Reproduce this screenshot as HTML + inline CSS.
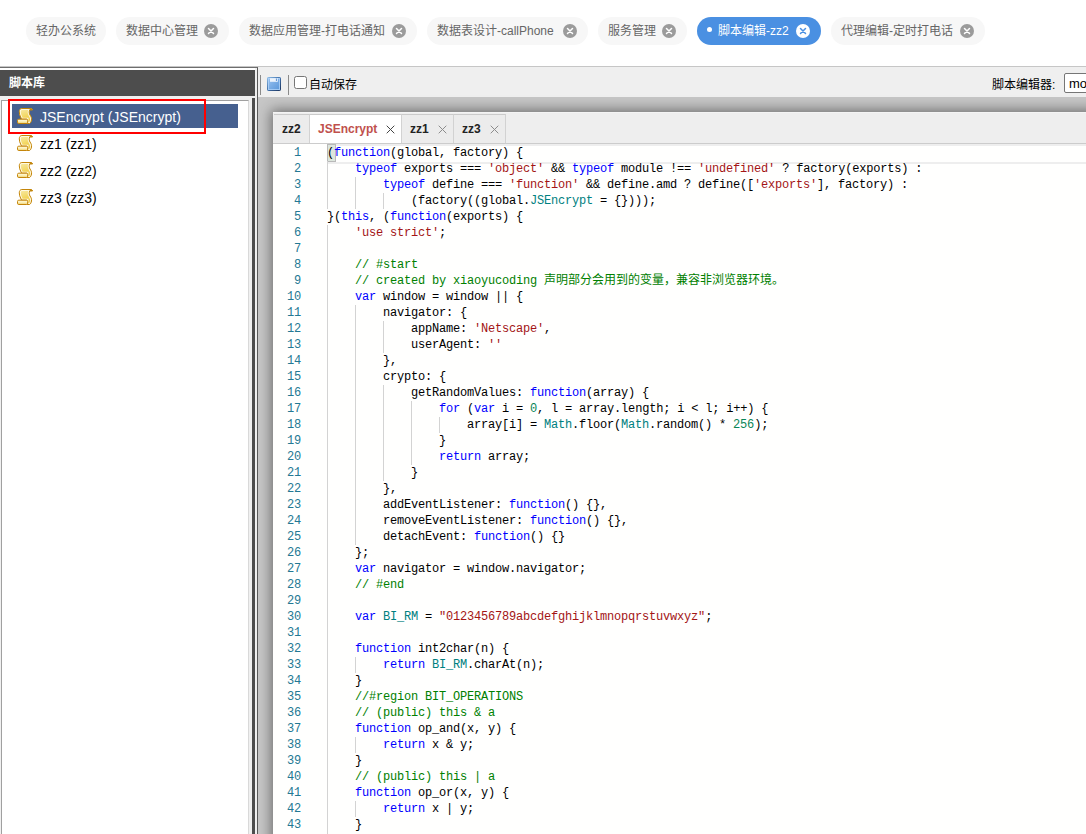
<!DOCTYPE html>
<html lang="zh-CN">
<head>
<meta charset="utf-8">
<title>脚本编辑-zz2</title>
<style>
*{box-sizing:border-box;margin:0;padding:0}
html,body{width:1086px;height:834px;overflow:hidden;background:#fff}
body{position:relative;font-family:"Liberation Sans","Noto Sans CJK SC",sans-serif;font-size:12px;color:#000}
/* ---------- top pills ---------- */
.pills{position:absolute;left:0;top:17px;height:28px;width:1086px}
.pill{position:absolute;top:0;height:28px;border-radius:14px;background:#f7f7f7;color:#666;font-size:12px;line-height:28px;padding-left:10px;white-space:nowrap}
.pill .x{position:absolute;right:11px;top:7px;width:14px;height:14px;border-radius:50%;background:#9b9b9b}
.pill .x svg{position:absolute;left:0;top:0;width:14px;height:14px}
.pill.on{background:#4a90e2;color:#fff;padding-left:21px}
.pill.on .dot{position:absolute;left:10.3px;top:9.6px;width:5px;height:5px;border-radius:50%;background:#fff}
.pill.on .x{background:#fff}
/* ---------- left panel ---------- */
.topline{position:absolute;left:0;top:66px;width:1086px;height:1px;background:#c6c6c6}
.left{position:absolute;left:0;top:67px;width:258px;height:767px;background:#f0f0f0;border-top:1px solid #6e6e6e;border-right:1px solid #5a5a5a}
.lhead{position:absolute;left:0;top:0;width:255px;height:28px;background:#4d4d4d;color:#fff;font-weight:bold;font-size:12px;line-height:27px;padding-left:9px;border-top:2px solid #fff}
.tree{position:absolute;left:1px;top:32px;width:248px;height:740px;background:#fff;border:1px solid #a0a0a0;border-right-color:#d9d9d9}
.split{position:absolute;left:252px;top:30px;width:3px;height:740px;background:#4d4d4d}
.row{position:absolute;left:10px;width:226px;height:24px;font-size:14px;line-height:26px;color:#000;padding-left:28px;white-space:nowrap}
.row.sel{background:#46608f;color:#fff}
.row svg{position:absolute;left:5px;top:4px;width:16px;height:16px}
.redbox{position:absolute;left:8px;top:99px;width:198px;height:35px;border:2px solid #ff0000}
/* ---------- right panel ---------- */
.right{position:absolute;left:258px;top:67px;width:828px;height:767px;background:#c6c6c6}
.tbar{position:absolute;left:0;top:0;width:828px;height:30px;background:#efefef}
.sep{position:absolute;top:8px;width:1px;height:20px;background:#8a8a8a}
.save{position:absolute;left:9px;top:10px;width:14px;height:14px}
.cb{position:absolute;left:36px;top:9px;width:13px;height:13px;border:1px solid #767676;border-radius:2.5px;background:#fff}
.cbl{position:absolute;left:51px;top:9px;font-size:12px;line-height:18px;color:#000}
.edl{position:absolute;left:734px;top:9px;font-size:12px;line-height:18px;color:#000}
.sel2{position:absolute;left:806px;top:6px;width:40px;height:20px;border:1px solid #767676;border-radius:2px;background:#fff;font-size:13px;line-height:19px;padding-left:4px}
.panel{position:absolute;left:15px;top:45px;width:830px;height:740px;background:#fff;box-shadow:0 0 12px 2px rgba(0,0,0,.45)}
.tabs{position:absolute;left:0;top:0;width:830px;height:32px;background:#eeeeee;border-bottom:1px solid #cccccc;border-top:1px solid #f4f4f4}
.tab{position:absolute;top:1px;height:29px;background:#ececec;border-top:1px solid #cbcbcb;border-right:1px solid #d2d2d2;font-weight:bold;font-size:12px;line-height:29px;color:#222;padding-left:8px;white-space:nowrap}
.tab.on{background:#fff;color:#c0504d}
.tab b{position:absolute;right:6px;top:10px;width:9px;height:9px}
.tab b svg{display:block;width:9px;height:9px;stroke:#8c8c8c}
.tab.on b svg{stroke:#444}
/* ---------- editor ---------- */
.ed{position:absolute;left:0;top:32px;width:830px;height:720px;background:#fffffe;font-family:"Liberation Mono","Noto Sans CJK SC",monospace;font-size:12px;letter-spacing:-0.2px;line-height:16px}
.nums{position:absolute;left:0;top:1px;width:28px;text-align:right;color:#237893}
.nums div{height:16px}
.code{position:absolute;left:54px;top:1px;width:775px;color:#000}
.ln{position:relative;height:16px;white-space:pre}
.g{position:absolute;left:0;top:0;height:16px;background:repeating-linear-gradient(to right,#d3d3d3 0,#d3d3d3 1px,transparent 1px,transparent 28px)}
.cur{position:absolute;left:54px;top:0;width:776px;height:20px;border:2px solid #eeeeee}
.bmb{position:absolute;left:54px;top:0;width:9px;height:18px;background:#dde6dd;border:1px solid #b9b9b9}
.z{letter-spacing:0}
.k{color:#0000ff}.s{color:#a31515}.c{color:#008000}.n{color:#098658}.t{color:#008080}
</style>
</head>
<body>
<svg width="0" height="0" style="position:absolute"><defs><linearGradient id="sc" x1="0" y1="0" x2="0.3" y2="1"><stop offset="0" stop-color="#f8ecb0"/><stop offset="0.55" stop-color="#f3d968"/><stop offset="1" stop-color="#efc534"/></linearGradient><linearGradient id="sr" x1="0" y1="0" x2="0" y2="1"><stop offset="0" stop-color="#fffbe6"/><stop offset="0.5" stop-color="#fbf0b8"/><stop offset="1" stop-color="#efd070"/></linearGradient><clipPath id="scp"><path d="M4.8 .5H14c.9.1 1.400.700 1.500 1.500H12.700c-.800 1.800-.500 3.600.300 5 1.200 1.600 1.800 3.100 1.500 5-.300 1.800-1 3-2 3.500H10V11.200H4.600L3.600 9C2.800 7.500 2.300 6 2.300 3.800 2.300 2 3.200.500 4.800.500z"/></clipPath></defs></svg>
<!-- top tab pills -->
<div class="pills">
  <div class="pill" style="left:26px;width:80px">轻办公系统</div>
  <div class="pill" style="left:116px;width:113px">数据中心管理<span class="x"><svg viewBox="0 0 14 14"><path d="M4.5 4.5l5 5M9.5 4.5l-5 5" stroke="#fff" stroke-width="1.5" stroke-linecap="round" fill="none"/></svg></span></div>
  <div class="pill" style="left:239px;width:178px">数据应用管理-打电话通知<span class="x"><svg viewBox="0 0 14 14"><path d="M4.5 4.5l5 5M9.5 4.5l-5 5" stroke="#fff" stroke-width="1.5" stroke-linecap="round" fill="none"/></svg></span></div>
  <div class="pill" style="left:427px;width:161px">数据表设计-callPhone<span class="x"><svg viewBox="0 0 14 14"><path d="M4.5 4.5l5 5M9.5 4.5l-5 5" stroke="#fff" stroke-width="1.5" stroke-linecap="round" fill="none"/></svg></span></div>
  <div class="pill" style="left:598px;width:89px">服务管理<span class="x"><svg viewBox="0 0 14 14"><path d="M4.5 4.5l5 5M9.5 4.5l-5 5" stroke="#fff" stroke-width="1.5" stroke-linecap="round" fill="none"/></svg></span></div>
  <div class="pill on" style="left:697px;width:124px"><span class="dot"></span>脚本编辑-zz2<span class="x"><svg viewBox="0 0 14 14"><path d="M4.5 4.5l5 5M9.5 4.5l-5 5" stroke="#4a90e2" stroke-width="1.5" stroke-linecap="round" fill="none"/></svg></span></div>
  <div class="pill" style="left:831px;width:154px">代理编辑-定时打电话<span class="x"><svg viewBox="0 0 14 14"><path d="M4.5 4.5l5 5M9.5 4.5l-5 5" stroke="#fff" stroke-width="1.5" stroke-linecap="round" fill="none"/></svg></span></div>
</div>
<div class="topline"></div>

<!-- left: script library -->
<div class="left">
  <div class="lhead">脚本库</div>
  <div class="tree">
    <div class="row sel" style="top:3px"><svg viewBox="0 0 16 16"><path d="M4.8 .5H14c.9.1 1.400.700 1.500 1.500H12.700c-.800 1.800-.500 3.600.300 5 1.200 1.600 1.800 3.100 1.500 5-.300 1.800-1 3-2 3.500H10V11.200H4.600L3.600 9C2.800 7.500 2.300 6 2.300 3.800 2.300 2 3.200.500 4.800.500z" fill="url(#sc)"/><path d="M4.8 .5H14c.9.1 1.400.700 1.500 1.500H12.700c-.800 1.800-.500 3.600.300 5 1.200 1.600 1.800 3.100 1.500 5-.300 1.800-1 3-2 3.500H10V11.200H4.600L3.600 9C2.800 7.500 2.300 6 2.300 3.800 2.300 2 3.200.500 4.800.500z" fill="none" stroke="#fffdf0" stroke-opacity=".85" stroke-width="3" clip-path="url(#scp)"/><path d="M12.700 2h2.800c-.100-.800-.600-1.400-1.500-1.500h-1.200z" fill="#b8871a"/><path d="M4.8 .5H14c.9.1 1.400.700 1.500 1.500H12.700c-.800 1.800-.500 3.600.300 5 1.200 1.600 1.800 3.100 1.500 5-.300 1.800-1 3-2 3.500H10V11.200H4.600L3.600 9C2.800 7.500 2.300 6 2.300 3.800 2.300 2 3.200.500 4.800.500z" fill="none" stroke="#c4850a" stroke-width="1" stroke-linejoin="round"/><rect x=".5" y="11.200" width="10.200" height="4.300" rx="1.300" fill="url(#sr)" stroke="#c4850a" stroke-width="1"/></svg>JSEncrypt (JSEncrypt)</div>
    <div class="row" style="top:30px"><svg viewBox="0 0 16 16"><path d="M4.8 .5H14c.9.1 1.400.700 1.500 1.500H12.700c-.800 1.800-.500 3.600.300 5 1.200 1.600 1.800 3.100 1.500 5-.300 1.800-1 3-2 3.500H10V11.200H4.600L3.600 9C2.800 7.500 2.300 6 2.300 3.800 2.300 2 3.200.500 4.800.500z" fill="url(#sc)"/><path d="M4.8 .5H14c.9.1 1.400.700 1.500 1.500H12.700c-.800 1.800-.500 3.600.300 5 1.200 1.600 1.800 3.100 1.500 5-.300 1.800-1 3-2 3.500H10V11.200H4.600L3.600 9C2.800 7.500 2.300 6 2.300 3.800 2.300 2 3.200.500 4.800.500z" fill="none" stroke="#fffdf0" stroke-opacity=".85" stroke-width="3" clip-path="url(#scp)"/><path d="M12.700 2h2.800c-.100-.800-.600-1.400-1.500-1.500h-1.200z" fill="#b8871a"/><path d="M4.8 .5H14c.9.1 1.400.700 1.500 1.500H12.700c-.800 1.800-.500 3.600.300 5 1.200 1.600 1.800 3.100 1.500 5-.300 1.800-1 3-2 3.500H10V11.200H4.600L3.600 9C2.800 7.500 2.300 6 2.300 3.800 2.300 2 3.200.500 4.800.500z" fill="none" stroke="#c4850a" stroke-width="1" stroke-linejoin="round"/><rect x=".5" y="11.200" width="10.200" height="4.300" rx="1.300" fill="url(#sr)" stroke="#c4850a" stroke-width="1"/></svg>zz1 (zz1)</div>
    <div class="row" style="top:57px"><svg viewBox="0 0 16 16"><path d="M4.8 .5H14c.9.1 1.400.700 1.500 1.500H12.700c-.800 1.800-.500 3.600.300 5 1.200 1.600 1.800 3.100 1.500 5-.300 1.800-1 3-2 3.500H10V11.200H4.600L3.600 9C2.800 7.500 2.300 6 2.300 3.800 2.300 2 3.200.500 4.800.500z" fill="url(#sc)"/><path d="M4.8 .5H14c.9.1 1.400.700 1.500 1.500H12.700c-.800 1.800-.500 3.600.300 5 1.200 1.600 1.800 3.100 1.500 5-.300 1.800-1 3-2 3.500H10V11.200H4.600L3.600 9C2.800 7.500 2.300 6 2.300 3.800 2.300 2 3.200.500 4.800.500z" fill="none" stroke="#fffdf0" stroke-opacity=".85" stroke-width="3" clip-path="url(#scp)"/><path d="M12.700 2h2.800c-.100-.800-.600-1.400-1.500-1.500h-1.200z" fill="#b8871a"/><path d="M4.8 .5H14c.9.1 1.400.700 1.500 1.500H12.700c-.800 1.800-.500 3.600.300 5 1.200 1.600 1.800 3.100 1.500 5-.300 1.800-1 3-2 3.500H10V11.200H4.600L3.600 9C2.800 7.500 2.300 6 2.300 3.800 2.300 2 3.200.500 4.800.500z" fill="none" stroke="#c4850a" stroke-width="1" stroke-linejoin="round"/><rect x=".5" y="11.200" width="10.200" height="4.300" rx="1.300" fill="url(#sr)" stroke="#c4850a" stroke-width="1"/></svg>zz2 (zz2)</div>
    <div class="row" style="top:84px"><svg viewBox="0 0 16 16"><path d="M4.8 .5H14c.9.1 1.400.700 1.500 1.500H12.700c-.800 1.800-.500 3.600.300 5 1.200 1.600 1.800 3.100 1.500 5-.300 1.800-1 3-2 3.500H10V11.200H4.600L3.600 9C2.800 7.500 2.300 6 2.300 3.800 2.300 2 3.200.500 4.800.500z" fill="url(#sc)"/><path d="M4.8 .5H14c.9.1 1.400.700 1.500 1.500H12.700c-.800 1.800-.500 3.600.300 5 1.200 1.600 1.800 3.100 1.500 5-.300 1.800-1 3-2 3.500H10V11.200H4.600L3.600 9C2.800 7.500 2.300 6 2.300 3.800 2.300 2 3.200.500 4.800.500z" fill="none" stroke="#fffdf0" stroke-opacity=".85" stroke-width="3" clip-path="url(#scp)"/><path d="M12.700 2h2.800c-.100-.800-.600-1.400-1.500-1.500h-1.200z" fill="#b8871a"/><path d="M4.8 .5H14c.9.1 1.400.700 1.500 1.500H12.700c-.800 1.800-.500 3.600.300 5 1.200 1.600 1.800 3.100 1.500 5-.300 1.800-1 3-2 3.500H10V11.200H4.600L3.600 9C2.800 7.500 2.300 6 2.300 3.800 2.300 2 3.200.500 4.800.500z" fill="none" stroke="#c4850a" stroke-width="1" stroke-linejoin="round"/><rect x=".5" y="11.200" width="10.200" height="4.300" rx="1.300" fill="url(#sr)" stroke="#c4850a" stroke-width="1"/></svg>zz3 (zz3)</div>
  </div>
  <div class="split"></div>
</div>
<div class="redbox"></div>

<!-- right: editor -->
<div class="right">
  <div class="tbar">
    <div class="sep" style="left:2px"></div>
    <svg class="save" viewBox="0 0 14 14">
      <defs><linearGradient id="sg" x1="0" y1="0" x2="1" y2="1"><stop offset="0" stop-color="#9cc4f2"/><stop offset="1" stop-color="#5694d8"/></linearGradient>
      <linearGradient id="so" x1="0" y1="0" x2="1" y2="1"><stop offset="0" stop-color="#8cbbe6"/><stop offset="0.5" stop-color="#3f6ea8"/><stop offset="1" stop-color="#1c355f"/></linearGradient></defs>
      <rect x="0.5" y="0.5" width="13" height="13" rx="0.700" fill="url(#sg)" stroke="url(#so)"/>
      <rect x="1.5" y="1.5" width="11" height="11" fill="none" stroke="#b4d6fa" stroke-opacity=".75"/>
      <rect x="3" y="1.200" width="7.800" height="3.600" fill="#ecf3fc"/>
      <rect x="8.900" y="1.500" width="1" height="2.500" fill="#5d92d2"/>
    </svg>
    <div class="sep" style="left:30px"></div>
    <div class="cb"></div>
    <div class="cbl">自动保存</div>
    <div class="edl">脚本编辑器:</div>
    <div class="sel2">monaco</div>
  </div>
  <div class="panel">
    <div class="tabs">
      <div class="tab" style="left:1px;width:36px">zz2</div>
      <div class="tab on" style="left:37px;width:92px">JSEncrypt<b><svg viewBox="0 0 9 9"><path d="M0.700 0.700l7.600 7.600M8.300 0.700l-7.600 7.600" stroke-width="1" fill="none"/></svg></b></div>
      <div class="tab" style="left:129px;width:52px">zz1<b><svg viewBox="0 0 9 9"><path d="M0.700 0.700l7.600 7.600M8.300 0.700l-7.600 7.600" stroke-width="1" fill="none"/></svg></b></div>
      <div class="tab" style="left:181px;width:52px">zz3<b><svg viewBox="0 0 9 9"><path d="M0.700 0.700l7.600 7.600M8.300 0.700l-7.600 7.600" stroke-width="1" fill="none"/></svg></b></div>
    </div>
    <div class="ed">
      <div class="cur"></div><div class="bmb"></div>
      <div class="nums"><div>1</div><div>2</div><div>3</div><div>4</div><div>5</div><div>6</div><div>7</div><div>8</div><div>9</div><div>10</div><div>11</div><div>12</div><div>13</div><div>14</div><div>15</div><div>16</div><div>17</div><div>18</div><div>19</div><div>20</div><div>21</div><div>22</div><div>23</div><div>24</div><div>25</div><div>26</div><div>27</div><div>28</div><div>29</div><div>30</div><div>31</div><div>32</div><div>33</div><div>34</div><div>35</div><div>36</div><div>37</div><div>38</div><div>39</div><div>40</div><div>41</div><div>42</div><div>43</div><div>44</div></div>
      <div class="code"><div class="ln">(<span class="k">function</span>(global, factory) {</div><div class="ln"><i class="g" style="width:28px"></i>    <span class="k">typeof</span> exports === <span class="s">'object'</span> &amp;&amp; <span class="k">typeof</span> module !== <span class="s">'undefined'</span> ? factory(exports) :</div><div class="ln"><i class="g" style="width:56px"></i>        <span class="k">typeof</span> define === <span class="s">'function'</span> &amp;&amp; define.amd ? define([<span class="s">'exports'</span>], factory) :</div><div class="ln"><i class="g" style="width:84px"></i>            (factory((global.<span class="t">JSEncrypt</span> = {})));</div><div class="ln">}(<span class="k">this</span>, (<span class="k">function</span>(exports) {</div><div class="ln"><i class="g" style="width:28px"></i>    <span class="s">'use strict'</span>;</div><div class="ln"><i class="g" style="width:28px"></i></div><div class="ln"><i class="g" style="width:28px"></i>    <span class="c">// #start</span></div><div class="ln"><i class="g" style="width:28px"></i>    <span class="c">// created by xiaoyucoding <span class="z">声明部分会用到的变量，兼容非浏览器环境。</span></span></div><div class="ln"><i class="g" style="width:28px"></i>    <span class="k">var</span> window = window || {</div><div class="ln"><i class="g" style="width:56px"></i>        navigator: {</div><div class="ln"><i class="g" style="width:84px"></i>            appName: <span class="s">'Netscape'</span>,</div><div class="ln"><i class="g" style="width:84px"></i>            userAgent: <span class="s">''</span></div><div class="ln"><i class="g" style="width:56px"></i>        },</div><div class="ln"><i class="g" style="width:56px"></i>        crypto: {</div><div class="ln"><i class="g" style="width:84px"></i>            getRandomValues: <span class="k">function</span>(array) {</div><div class="ln"><i class="g" style="width:112px"></i>                <span class="k">for</span> (<span class="k">var</span> i = <span class="n">0</span>, l = array.length; i &lt; l; i++) {</div><div class="ln"><i class="g" style="width:140px"></i>                    array[i] = <span class="t">Math</span>.floor(<span class="t">Math</span>.random() * <span class="n">256</span>);</div><div class="ln"><i class="g" style="width:112px"></i>                }</div><div class="ln"><i class="g" style="width:112px"></i>                <span class="k">return</span> array;</div><div class="ln"><i class="g" style="width:84px"></i>            }</div><div class="ln"><i class="g" style="width:56px"></i>        },</div><div class="ln"><i class="g" style="width:56px"></i>        addEventListener: <span class="k">function</span>() {},</div><div class="ln"><i class="g" style="width:56px"></i>        removeEventListener: <span class="k">function</span>() {},</div><div class="ln"><i class="g" style="width:56px"></i>        detachEvent: <span class="k">function</span>() {}</div><div class="ln"><i class="g" style="width:28px"></i>    };</div><div class="ln"><i class="g" style="width:28px"></i>    <span class="k">var</span> navigator = window.navigator;</div><div class="ln"><i class="g" style="width:28px"></i>    <span class="c">// #end</span></div><div class="ln"><i class="g" style="width:28px"></i></div><div class="ln"><i class="g" style="width:28px"></i>    <span class="k">var</span> <span class="t">BI_RM</span> = <span class="s">"0123456789abcdefghijklmnopqrstuvwxyz"</span>;</div><div class="ln"><i class="g" style="width:28px"></i></div><div class="ln"><i class="g" style="width:28px"></i>    <span class="k">function</span> int2char(n) {</div><div class="ln"><i class="g" style="width:56px"></i>        <span class="k">return</span> <span class="t">BI_RM</span>.charAt(n);</div><div class="ln"><i class="g" style="width:28px"></i>    }</div><div class="ln"><i class="g" style="width:28px"></i>    <span class="c">//#region BIT_OPERATIONS</span></div><div class="ln"><i class="g" style="width:28px"></i>    <span class="c">// (public) this &amp; a</span></div><div class="ln"><i class="g" style="width:28px"></i>    <span class="k">function</span> op_and(x, y) {</div><div class="ln"><i class="g" style="width:56px"></i>        <span class="k">return</span> x &amp; y;</div><div class="ln"><i class="g" style="width:28px"></i>    }</div><div class="ln"><i class="g" style="width:28px"></i>    <span class="c">// (public) this | a</span></div><div class="ln"><i class="g" style="width:28px"></i>    <span class="k">function</span> op_or(x, y) {</div><div class="ln"><i class="g" style="width:56px"></i>        <span class="k">return</span> x | y;</div><div class="ln"><i class="g" style="width:28px"></i>    }</div><div class="ln"><i class="g" style="width:28px"></i>    </div></div>
    </div>
  </div>
</div>
</body>
</html>
